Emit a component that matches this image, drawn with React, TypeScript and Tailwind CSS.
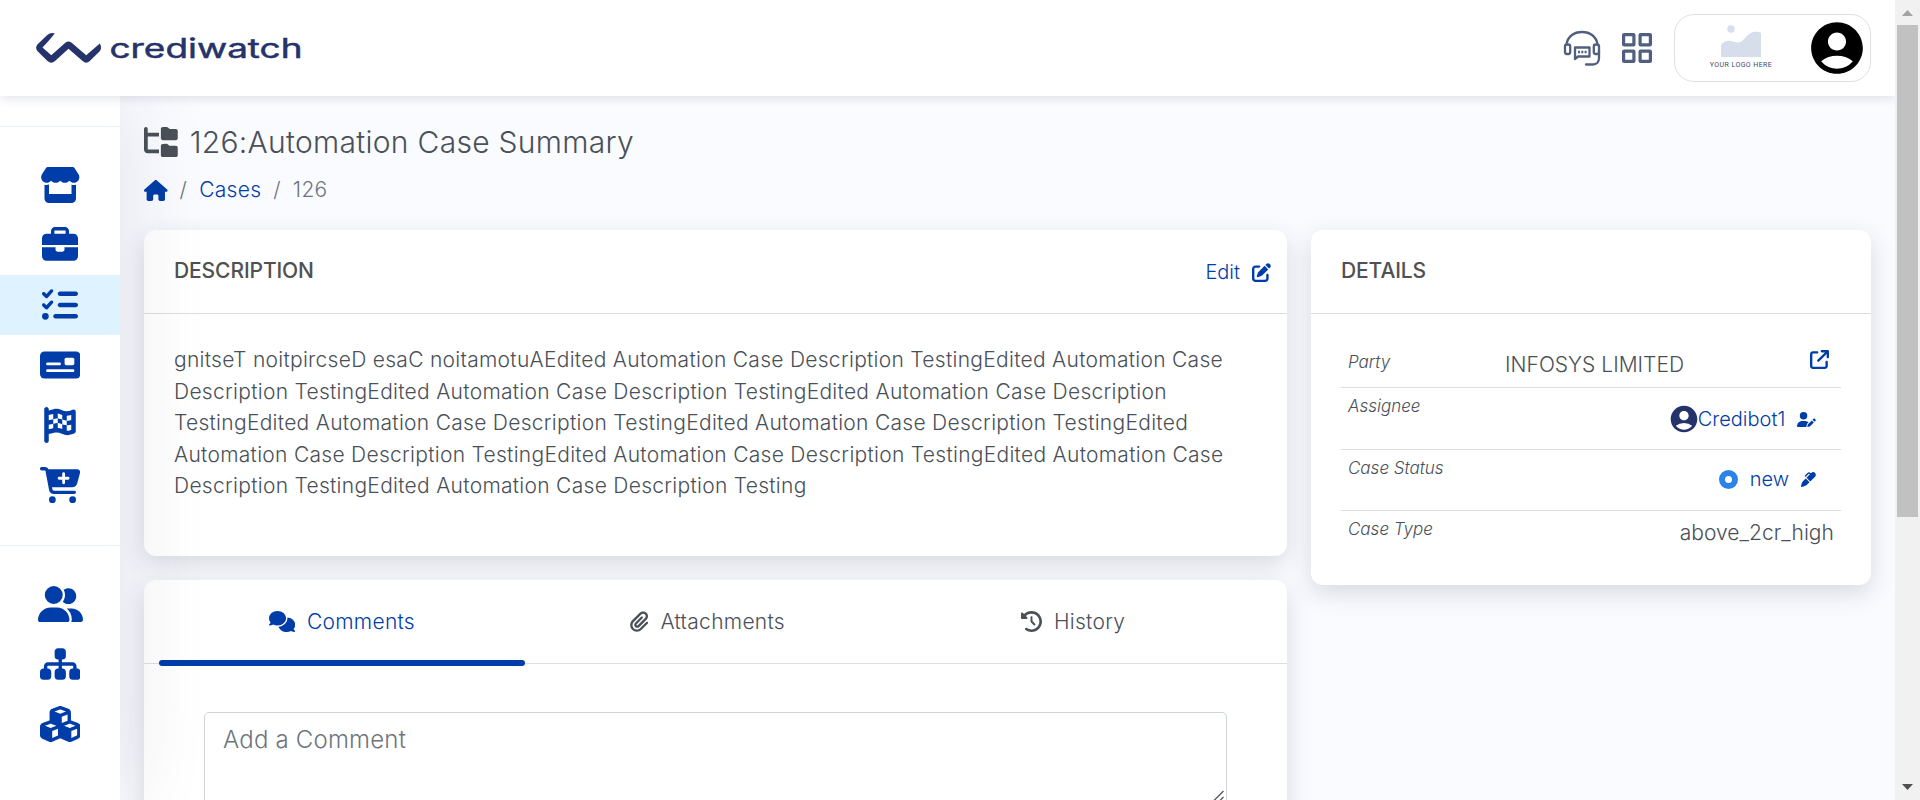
import React from "react";
import {
  FaStore, FaBriefcase, FaListCheck, FaFlagCheckered, FaCartPlus, FaUserGroup,
  FaSitemap, FaCubes, FaFolderTree, FaHouse, FaPenToSquare, FaArrowUpRightFromSquare, FaUserPen,
  FaMarker, FaComments, FaPaperclip, FaClockRotateLeft,
} from "react-icons/fa6";
import { MdAccountCircle } from "react-icons/md";

function Logo() {
  return (
    <svg className="ml-9 h-[30px] w-[268px] overflow-visible" viewBox="36 33 268 30">
      <path
        d="M54.800 33.400L48.300 41.200L42.500 47.500L51.300 55.300L65.600 42.600Q68.500 40.300 71.400 42.600L86.200 55.300L99.800 43.500Q101.500 46.200 101 48.600Q100.600 50.300 99.200 51.700L89.800 61Q86.200 64.300 82.600 61L68.500 48.800L55 61Q51.300 64.300 47.500 61L37.600 51.300Q34.600 47.700 37.600 44.200L47.300 35Q50.600 32 54.800 33.400Z"
        fill="#26336b"
      />
      <text x="109.500" y="58" textLength="193" lengthAdjust="spacingAndGlyphs" fill="#26336b" stroke="#26336b" strokeWidth="0.500" className="font-['Inter',sans-serif] text-[26.500px] font-normal">
        crediwatch
      </text>
    </svg>
  );
}

function Headset() {
  return (
    <svg className="h-[36px] w-[38px]" viewBox="0 0 38 36" fill="none" stroke="#505f80" strokeWidth="2.300">
      <path d="M3.500 14.500C4.500 6.500 11 2 19 2S33.500 6.500 34.500 14.500M36 21v7c0 4-2.500 6.500-6 6.500h-7" strokeLinecap="round" />
      <rect x="2" y="14.500" width="5.200" height="9.500" rx="2" />
      <rect x="30.800" y="14.500" width="5.200" height="9.500" rx="2" />
      <path d="M12 17.500h14.500v9H15l-3 2.500z" strokeLinejoin="round" />
      <path d="M15 22h2M18.300 22h2M21.600 22h2" />
    </svg>
  );
}

function Grid() {
  return (
    <svg className="h-[30px] w-[30px]" viewBox="0 0 30 30" fill="none" stroke="#505f80" strokeWidth="3.200">
      <rect x="1.600" y="1.600" width="10.300" height="10.300" rx="0.500" />
      <rect x="18.100" y="1.600" width="10.300" height="10.300" rx="0.500" />
      <rect x="1.600" y="18.100" width="10.300" height="10.300" rx="0.500" />
      <rect x="18.100" y="18.100" width="10.300" height="10.300" rx="0.500" />
    </svg>
  );
}

function MoneyCheck({ className }: { className: string }) {
  return (
    <svg className={className} viewBox="0 0 40.5 36">
      <rect y="4.500" width="40.500" height="27" rx="4.500" fill="currentColor" />
      <rect x="6.200" y="15.400" width="14.600" height="2.800" rx="1" fill="#fff" />
      <rect x="24.600" y="10.700" width="9.700" height="7.500" rx="1.600" fill="#fff" />
      <rect x="6.200" y="22.200" width="28.100" height="2.800" rx="1" fill="#fff" />
    </svg>
  );
}

function PlaceholderLogo() {
  return (
    <svg className="mb-1 h-[44px] w-[64px]" viewBox="0 0 64 44">
      <circle cx="22" cy="5" r="3.700" fill="#d7deeb" />
      <path d="M12 33V21c3-5 8-5 12-3.500 5 2 8 1.500 12-3.500 5-6 9-7 14-6 1.500.3 2 .5 2 2V33z" fill="#d7deeb" />
      <text x="0.800" y="42.500" textLength="62" fill="#454c5c" className="font-['Roboto',sans-serif] text-[7px] font-normal">YOUR LOGO HERE</text>
    </svg>
  );
}

function Header() {
  return (
    <header className="relative z-20 flex h-24 shrink-0 items-center bg-white shadow-[0_2px_10px_rgba(40,50,80,0.14)]">
      <Logo />
      <div className="ml-auto mr-6 flex items-center">
        <Headset />
        <div className="ml-[21px]"><Grid /></div>
        <div className="ml-[22px] flex h-[68px] w-[197px] items-center justify-between rounded-[20px] border border-[#dfdfe7] pl-[34px] pr-[2px]">
          <PlaceholderLogo />
          <MdAccountCircle className="h-[62px] w-[62px] text-black" />
        </div>
      </div>
    </header>
  );
}

const mainItems = [
  { Icon: FaStore, size: "h-[36px] w-[40.5px]" },
  { Icon: FaBriefcase, size: "h-[36px] w-[36px]" },
  { Icon: FaListCheck, size: "h-[36px] w-[36px]" },
  { Icon: MoneyCheck, size: "h-[36px] w-[40.5px]" },
  { Icon: FaFlagCheckered, size: "h-[36px] w-[36px]" },
  { Icon: FaCartPlus, size: "h-[36px] w-[40.5px]" },
];
const adminItems = [
  { Icon: FaUserGroup, size: "h-[36px] w-[45px]" },
  { Icon: FaSitemap, size: "h-[36px] w-[40.5px]" },
  { Icon: FaCubes, size: "h-[36px] w-[40.5px]" },
];

function Sidebar() {
  return (
    <aside className="relative z-10 w-[120px] shrink-0 bg-white text-[#003da8] shadow-[0_0_90px_rgba(40,45,75,0.12)]">
      <div className="h-[30px]" />
      <div className="border-y border-[#def1fd] pb-[30px] pt-[28px]">
        {mainItems.map(({ Icon, size }, i) => (
          <div key={i} className={i === 2 ? "flex h-[60px] items-center justify-center bg-[#dff2ff]" : "flex h-[60px] items-center justify-center"}>
            <Icon className={size} />
          </div>
        ))}
      </div>
      <div className="pt-[28px]">
        {adminItems.map(({ Icon, size }, i) => (
          <div key={i} className="flex h-[60px] items-center justify-center"><Icon className={size} /></div>
        ))}
      </div>
    </aside>
  );
}

function Card({ className, children }: { className: string; children: React.ReactNode }) {
  return <section className={`rounded-xl bg-white shadow-[0_8px_24px_rgba(40,42,60,0.16)] ${className}`}>{children}</section>;
}

const description =
  "gnitseT noitpircseD esaC noitamotuAEdited Automation Case Description TestingEdited Automation Case Description TestingEdited Automation Case Description TestingEdited Automation Case Description TestingEdited Automation Case Description TestingEdited Automation Case Description TestingEdited Automation Case Description TestingEdited Automation Case Description TestingEdited Automation Case Description TestingEdited Automation Case Description Testing";

function Label({ children }: { children: React.ReactNode }) {
  return <span className="text-[17px] italic leading-[26px]">{children}</span>;
}

function Details() {
  return (
    <Card className="h-[355px] w-[560px] shrink-0">
      <div className="h-[84px] border-b border-[#dcdee2] pl-[30px] pt-[25px] text-[21px] font-medium leading-[32px] tracking-[-0.1px] text-[#505050]">DETAILS</div>
      <div className="px-[30px] pt-[29px]">
        <div className="flex h-[45px] items-start justify-between border-b border-[#dcdee2] pl-[7px] pr-[12px]">
          <div className="pt-[6px]"><Label>Party</Label></div>
          <span className="mr-[11px] pt-[7px] text-[21px] leading-[30px]">INFOSYS LIMITED</span>
          <FaArrowUpRightFromSquare className="mt-[7px] text-[19px] text-[#003da8]" />
        </div>
        <div className="flex h-[62px] items-start justify-between border-b border-[#dcdee2] pl-[7px] pr-[25px]">
          <div className="pt-[5px]"><Label>Assignee</Label></div>
          <div className="flex items-center pt-[15px] text-[#003da8]">
            <MdAccountCircle className="-mr-[2px] h-[32px] w-[32px] text-[#26336b]" />
            <span className="-mt-px text-[20px] leading-[30px]">Credibot1</span>
            <FaUserPen className="ml-[12px] h-[15px] w-[18.75px]" />
          </div>
        </div>
        <div className="flex h-[61px] items-start justify-between border-b border-[#dcdee2] pl-[7px] pr-[25px]">
          <div className="pt-[5px]"><Label>Case Status</Label></div>
          <div className="flex items-center pt-[15px] text-[#003da8]">
            <span className="-mt-px h-[19px] w-[19px] rounded-full border-[6px] border-[#2b83ea]" />
            <span className="-mt-px ml-[12px] text-[20px] leading-[30px]">new</span>
            <FaMarker className="ml-[12px] text-[15px]" />
          </div>
        </div>
        <div className="flex items-start justify-between pl-[7px] pr-[7px]">
          <div className="pt-[5px]"><Label>Case Type</Label></div>
          <span className="pt-[7px] text-[21px] leading-[30px] tracking-[0.05px]">above_2cr_high</span>
        </div>
      </div>
    </Card>
  );
}

export default function App() {
  return (
    <div className="flex h-[800px] w-[1920px] overflow-hidden bg-[#fafbff] font-['Inter',sans-serif] font-light text-[#495057]">
      <div className="flex min-w-0 flex-1 flex-col overflow-hidden">
        <Header />
        <div className="flex min-h-0 flex-1">
          <Sidebar />
          <main className="min-w-0 flex-1 pl-6 pt-[26px]">
            <h1 className="flex h-[40px] items-center text-[30px] font-light tracking-[0.28px]"><FaFolderTree className="mr-[12px] h-[30px] w-[33.75px]" />126:Automation Case Summary</h1>
            <nav className="mt-[12px] flex h-[32px] items-center text-[21px] tracking-[0.28px] text-[#6c757d]">
              <FaHouse className="h-[21px] w-[23.6px] text-[#003da8]" />
              <span className="mx-[12px]">/</span>
              <span className="text-[#003da8]">Cases</span>
              <span className="mx-[12px]">/</span>
              <span>126</span>
            </nav>
            <div className="mt-6 flex items-start gap-6">
              <div className="flex w-[1143px] shrink-0 flex-col gap-6">
                <Card className="h-[326px]">
                  <div className="flex h-[84px] items-start justify-between border-b border-[#dcdee2] pl-[30px] pr-[16px]">
                    <span className="pt-[25px] text-[21px] font-medium leading-[32px] tracking-[-0.1px] text-[#505050]">DESCRIPTION</span>
                    <span className="flex items-center pt-[26px] text-[20px] leading-[32px] text-[#003da8]">Edit<FaPenToSquare className="ml-[12px] text-[19px]" /></span>
                  </div>
                  <p className="px-[30px] pt-[30px] text-[21px] leading-[31.5px] tracking-[0.285px]">{description}</p>
                </Card>
                <Card className="h-[400px]">
                  <div className="grid h-[84px] grid-cols-3 border-b border-[#dcdee2] pl-[15px] pr-[31px] text-[21px] tracking-[0.28px]">
                    <div className="relative flex items-center justify-center text-[#003da8]">
                      <FaComments className="mr-[12px] h-[21px] w-[26.25px]" />Comments
                      <span className="absolute -bottom-[3px] left-0 h-[6px] w-full rounded-[3px] bg-[#003da8]" />
                    </div>
                    <div className="flex items-center justify-center"><FaPaperclip className="mr-[12px] h-[21px] w-[18.4px]" />Attachments</div>
                    <div className="flex items-center justify-center"><FaClockRotateLeft className="mr-[12px] text-[21px]" />History</div>
                  </div>
                  <div className="px-[60px] pt-12">
                    <div className="relative">
                      <textarea placeholder="Add a Comment" className="block h-[94px] w-[1023px] resize-none rounded-[5px] border border-[#ced4da] px-[18px] py-[9px] text-[24px] leading-[36px] tracking-[0.2px] placeholder:text-[#6c757d]" />
                      <svg className="absolute bottom-[3px] right-[2px] h-[13px] w-[13px]" viewBox="0 0 13 13" stroke="#555" strokeWidth="1.300"><path d="M0.500 12L11.500 1M6 12.500L11.500 7" /></svg>
                    </div>
                  </div>
                </Card>
              </div>
              <Details />
            </div>
          </main>
        </div>
      </div>
      <div className="flex w-[25px] shrink-0 flex-col items-center bg-[#f1f1f1]">
        <svg className="h-[25px] w-[25px] shrink-0" viewBox="0 0 25 25"><path d="M7 16h11l-5.500-6z" fill="#a3a3a3" /></svg>
        <div className="h-[492px] w-[21px] shrink-0 bg-[#c1c1c1]" />
        <svg className="mt-auto h-[25px] w-[25px] shrink-0" viewBox="0 0 25 25"><path d="M7 9h11l-5.500 6z" fill="#505050" /></svg>
      </div>
    </div>
  );
}
